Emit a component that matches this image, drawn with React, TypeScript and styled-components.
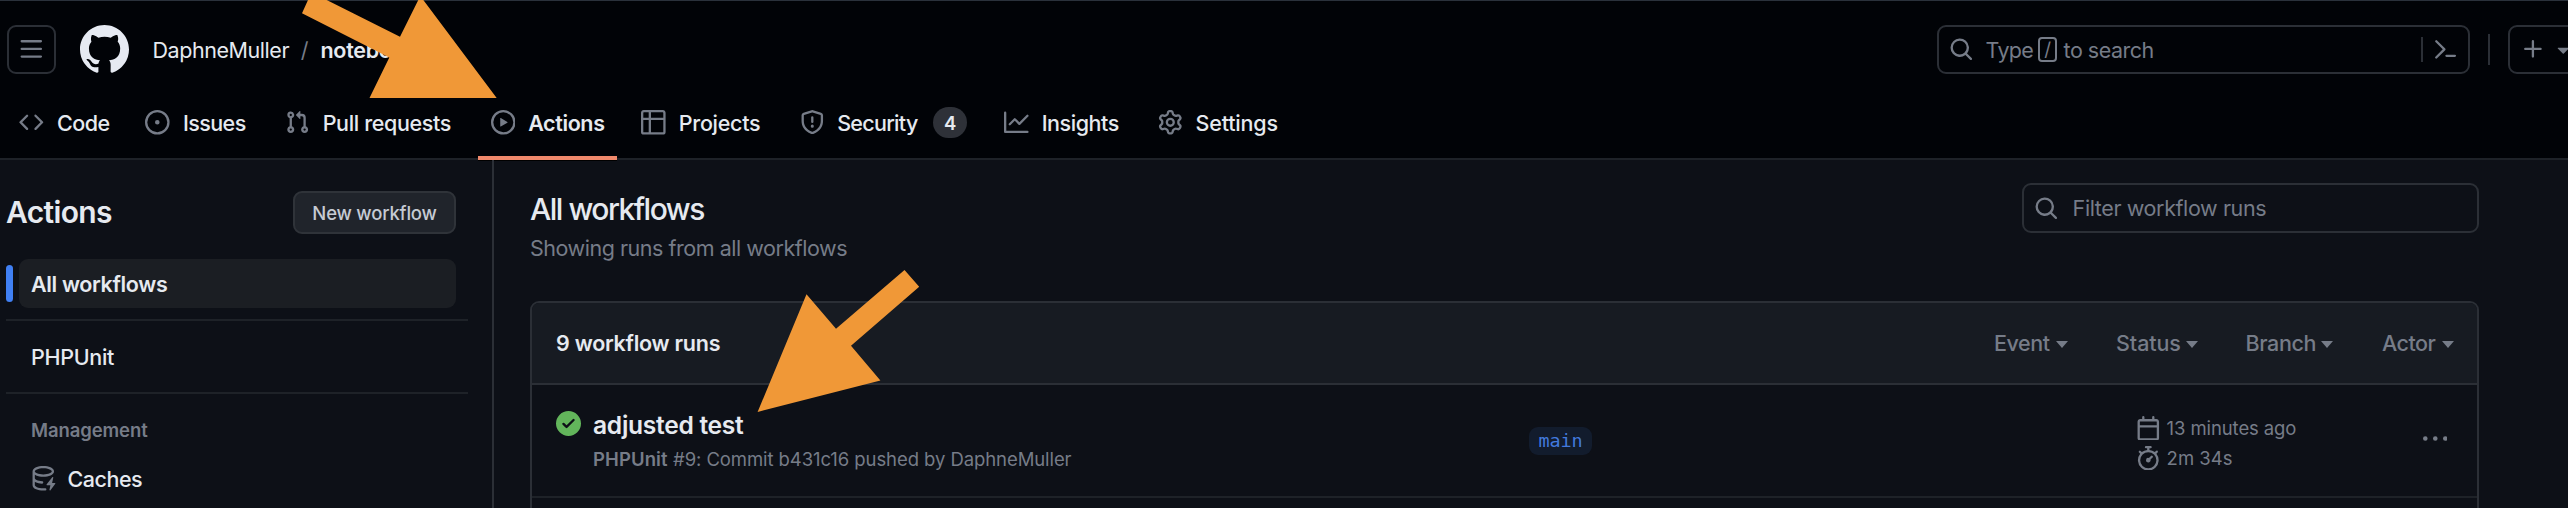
import React from 'react';
import styled, { createGlobalStyle } from 'styled-components';

const color = {
  header: '#010307',
  canvas: '#0d1017',
  subtle: '#171b22',
  border: '#2b2f36',
  borderMuted: '#1e2228',
  fg: '#e6eaf0',
  muted: '#767c88',
  accent: '#f0896c',
  blue: '#4080f4',
  green: '#62b55b',
  arrow: '#f09837',
};

const Global = createGlobalStyle`
  * { box-sizing: border-box; }
  body { margin: 0; background: ${color.canvas}; overflow: hidden; }
`;

const Page = styled.div`
  position: relative;
  width: 2568px;
  height: 508px;
  overflow: hidden;
  display: flex;
  flex-direction: column;
  background: ${color.canvas};
  color: ${color.fg};
  font-family: Inter, 'Liberation Sans', sans-serif;
  font-size: 21.5px;
`;

const Text = styled.span<{
  $ls?: number; $size?: number; $weight?: number; $lh?: number; $w?: number; $muted?: boolean; $mt?: number;
}>`
  display: block;
  flex: none;
  white-space: pre;
  letter-spacing: ${p => p.$ls ?? 0}px;
  font-size: ${p => p.$size ?? 21.5}px;
  font-weight: ${p => p.$weight ?? 400};
  line-height: ${p => p.$lh ?? 30}px;
  width: ${p => (p.$w ? `${p.$w}px` : 'auto')};
  margin-top: ${p => p.$mt ?? 0}px;
  color: ${p => (p.$muted ? color.muted : 'inherit')};
`;

const Svg = styled.svg<{ $size?: number }>`
  display: block;
  flex: none;
  width: ${p => p.$size ?? 24.6}px;
  height: ${p => p.$size ?? 24.6}px;
  fill: currentColor;
`;

const IconBox = styled.span`
  display: flex;
  flex: none;
  color: ${color.muted};
`;

const paths = {
  bars: 'M1 2.75A.75.75 0 0 1 1.75 2h12.5a.75.75 0 0 1 0 1.5H1.75A.75.75 0 0 1 1 2.75Zm0 5A.75.75 0 0 1 1.75 7h12.5a.75.75 0 0 1 0 1.5H1.75A.75.75 0 0 1 1 7.75ZM1.75 12h12.5a.75.75 0 0 1 0 1.5H1.75a.75.75 0 0 1 0-1.5Z',
  github: 'M8 0c4.42 0 8 3.58 8 8a8.013 8.013 0 0 1-5.45 7.59c-.4.08-.55-.17-.55-.38 0-.27.01-1.13.01-2.2 0-.75-.25-1.23-.54-1.48 1.78-.2 3.65-.88 3.65-3.95 0-.88-.31-1.59-.82-2.15.08-.2.36-1.02-.08-2.12 0 0-.67-.22-2.2.82-.64-.18-1.32-.27-2-.27-.68 0-1.36.09-2 .27-1.53-1.03-2.2-.82-2.2-.82-.44 1.1-.16 1.92-.08 2.12-.51.56-.82 1.28-.82 2.15 0 3.06 1.86 3.75 3.64 3.95-.23.2-.44.55-.51 1.07-.46.21-1.61.55-2.33-.66-.15-.24-.6-.83-1.23-.82-.67.01-.27.38.01.53.34.19.73.9.82 1.13.16.45.68 1.31 2.69.94 0 .67.01 1.3.01 1.49 0 .21-.15.45-.55.38A7.995 7.995 0 0 1 0 8c0-4.42 3.58-8 8-8Z',
  code: 'm11.28 3.22 4.25 4.25a.75.75 0 0 1 0 1.06l-4.25 4.25a.749.749 0 0 1-1.275-.326.749.749 0 0 1 .215-.734L13.94 8l-3.72-3.72a.749.749 0 0 1 .326-1.275.749.749 0 0 1 .734.215Zm-6.56 0a.751.751 0 0 1 1.042.018.751.751 0 0 1 .018 1.042L2.06 8l3.72 3.72a.749.749 0 0 1-.326 1.275.749.749 0 0 1-.734-.215L.47 8.53a.75.75 0 0 1 0-1.06Z',
  issue: 'M8 9.5a1.5 1.5 0 1 0 0-3 1.5 1.5 0 0 0 0 3ZM8 0a8 8 0 1 1 0 16A8 8 0 0 1 8 0ZM1.5 8a6.5 6.5 0 1 0 13 0 6.5 6.5 0 0 0-13 0Z',
  pull: 'M1.5 3.25a2.25 2.25 0 1 1 3 2.122v5.256a2.251 2.251 0 1 1-1.5 0V5.372A2.25 2.25 0 0 1 1.5 3.25Zm5.677-.177L9.573.677A.25.25 0 0 1 10 .854V2.5h1A2.5 2.5 0 0 1 13.5 5v5.628a2.251 2.251 0 1 1-1.5 0V5a1 1 0 0 0-1-1h-1v1.646a.25.25 0 0 1-.427.177L7.177 3.427a.25.25 0 0 1 0-.354ZM3.75 2.5a.75.75 0 1 0 0 1.5.75.75 0 0 0 0-1.5Zm0 9.5a.75.75 0 1 0 0 1.5.75.75 0 0 0 0-1.5Zm8.25.75a.75.75 0 1 0 1.5 0 .75.75 0 0 0-1.5 0Z',
  play: 'M8 0a8 8 0 1 1 0 16A8 8 0 0 1 8 0ZM1.5 8a6.5 6.5 0 1 0 13 0 6.5 6.5 0 0 0-13 0Zm4.879-2.773 4.264 2.559a.25.25 0 0 1 0 .428l-4.264 2.559A.25.25 0 0 1 6 10.559V5.442a.25.25 0 0 1 .379-.215Z',
  table: 'M0 1.75C0 .784.784 0 1.75 0h12.5C15.216 0 16 .784 16 1.75v12.5A1.75 1.75 0 0 1 14.25 16H1.75A1.75 1.75 0 0 1 0 14.25ZM6.5 6.5v8h7.75a.25.25 0 0 0 .25-.25V6.5Zm8-1.5V1.75a.25.25 0 0 0-.25-.25H6.5V5Zm-13 1.5v7.75c0 .138.112.25.25.25H5v-8ZM5 5V1.5H1.75a.25.25 0 0 0-.25.25V5Z',
  shield: 'M7.467.133a1.748 1.748 0 0 1 1.066 0l5.25 1.68A1.75 1.75 0 0 1 15 3.48V7c0 1.566-.32 3.182-1.303 4.682-.983 1.498-2.585 2.813-5.032 3.855a1.697 1.697 0 0 1-1.33 0c-2.447-1.042-4.049-2.357-5.032-3.855C1.32 10.182 1 8.566 1 7V3.48a1.75 1.75 0 0 1 1.217-1.667Zm.61 1.429a.25.25 0 0 0-.153 0l-5.25 1.68a.25.25 0 0 0-.174.238V7c0 1.358.275 2.666 1.057 3.86.784 1.194 2.121 2.34 4.366 3.297a.196.196 0 0 0 .154 0c2.245-.956 3.582-2.104 4.366-3.298C13.225 9.666 13.5 8.36 13.5 7V3.48a.251.251 0 0 0-.174-.237l-5.25-1.68ZM8.75 4.75v3a.75.75 0 0 1-1.5 0v-3a.75.75 0 0 1 1.5 0ZM9 10.5a1 1 0 1 1-2 0 1 1 0 0 1 2 0Z',
  graph: 'M1.5 1.75V13.5h13.75a.75.75 0 0 1 0 1.5H.75a.75.75 0 0 1-.75-.75V1.75a.75.75 0 0 1 1.5 0Zm14.28 2.53-5.25 5.25a.75.75 0 0 1-1.06 0L7 7.06 4.28 9.78a.751.751 0 0 1-1.042-.018.751.751 0 0 1-.018-1.042l3.25-3.25a.75.75 0 0 1 1.06 0L10 7.94l4.72-4.72a.751.751 0 0 1 1.042.018.751.751 0 0 1 .018 1.042Z',
  gear: 'M8 0a8.2 8.2 0 0 1 .701.031C9.444.095 9.99.645 10.16 1.29l.288 1.107c.018.066.079.158.212.224.231.114.454.243.668.386.123.082.233.09.299.071l1.103-.303c.644-.176 1.392.021 1.82.63.27.385.506.792.704 1.218.315.675.111 1.422-.364 1.891l-.814.806c-.049.048-.098.147-.088.294.016.257.016.515 0 .772-.01.147.038.246.088.294l.814.806c.475.469.679 1.216.364 1.891a7.977 7.977 0 0 1-.704 1.217c-.428.61-1.176.807-1.82.63l-1.102-.302c-.067-.019-.177-.011-.3.071a5.909 5.909 0 0 1-.668.386c-.133.066-.194.158-.211.224l-.29 1.106c-.168.646-.715 1.196-1.458 1.26a8.006 8.006 0 0 1-1.402 0c-.743-.064-1.289-.614-1.458-1.26l-.289-1.106c-.018-.066-.079-.158-.212-.224a5.738 5.738 0 0 1-.668-.386c-.123-.082-.233-.09-.299-.071l-1.103.303c-.644.176-1.392-.021-1.82-.63a8.12 8.12 0 0 1-.704-1.218c-.315-.675-.111-1.422.363-1.891l.815-.806c.05-.048.098-.147.088-.294a6.214 6.214 0 0 1 0-.772c.01-.147-.038-.246-.088-.294l-.815-.806C.635 6.045.431 5.298.746 4.623a7.92 7.92 0 0 1 .704-1.217c.428-.61 1.176-.807 1.82-.63l1.102.302c.067.019.177.011.3-.071.214-.143.437-.272.668-.386.133-.066.194-.158.211-.224l.29-1.106C6.009.645 6.556.095 7.299.03 7.53.01 7.764 0 8 0Zm-.571 1.525c-.036.003-.108.036-.137.146l-.289 1.105c-.147.561-.549.967-.998 1.189-.173.086-.34.183-.5.29-.417.278-.97.423-1.529.27l-1.103-.303c-.109-.03-.175.016-.195.045-.22.312-.412.644-.573.99-.014.031-.021.11.059.19l.815.806c.411.406.562.957.53 1.456a4.709 4.709 0 0 0 0 .582c.032.499-.119 1.05-.53 1.456l-.815.806c-.081.08-.073.159-.059.19.162.346.353.677.573.989.02.03.085.076.195.046l1.102-.303c.56-.153 1.113-.008 1.53.27.161.107.328.204.501.29.447.222.85.629.997 1.189l.289 1.105c.029.109.101.143.137.146a6.6 6.6 0 0 0 1.142 0c.036-.003.108-.036.137-.146l.289-1.105c.147-.561.549-.967.998-1.189.173-.086.34-.183.5-.29.417-.278.97-.423 1.529-.27l1.103.303c.109.029.175-.016.195-.045.22-.313.411-.644.573-.99.014-.031.021-.11-.059-.19l-.815-.806c-.411-.406-.562-.957-.53-1.456a4.709 4.709 0 0 0 0-.582c-.032-.499.119-1.05.53-1.456l.815-.806c.081-.08.073-.159.059-.19a6.464 6.464 0 0 0-.573-.989c-.02-.03-.085-.076-.195-.046l-1.102.303c-.56.153-1.113.008-1.53-.27a4.44 4.44 0 0 0-.501-.29c-.447-.222-.85-.629-.997-1.189l-.289-1.105c-.029-.11-.101-.143-.137-.146a6.6 6.6 0 0 0-1.142 0ZM11 8a3 3 0 1 1-6 0 3 3 0 0 1 6 0ZM9.5 8a1.5 1.5 0 1 0-3.001.001A1.5 1.5 0 0 0 9.5 8Z',
  search: 'M10.68 11.74a6 6 0 0 1-7.922-8.982 6 6 0 0 1 8.982 7.922l3.04 3.04a.749.749 0 0 1-.326 1.275.749.749 0 0 1-.734-.215ZM11.5 7a4.499 4.499 0 1 0-8.997 0A4.499 4.499 0 0 0 11.5 7Z',
  prompt: 'm6.354 8.04-4.773 4.773a.75.75 0 1 0 1.061 1.06L7.945 8.57a.75.75 0 0 0 0-1.06L2.642 2.206a.75.75 0 0 0-1.06 1.061L6.353 8.04ZM8.75 11.5a.75.75 0 0 0 0 1.5h5.5a.75.75 0 0 0 0-1.5h-5.5Z',
  plus: 'M7.75 2a.75.75 0 0 1 .75.75V7h4.25a.75.75 0 0 1 0 1.5H8.5v4.25a.75.75 0 0 1-1.5 0V8.5H2.75a.75.75 0 0 1 0-1.5H7V2.75A.75.75 0 0 1 7.75 2Z',
  caret: 'm4.427 7.427 3.396 3.396a.25.25 0 0 0 .354 0l3.396-3.396A.25.25 0 0 0 11.396 7H4.604a.25.25 0 0 0-.177.427Z',
  cache: 'M2.5 5.724V8c0 .248.238.7 1.169 1.159.874.43 2.144.745 3.62.822a.75.75 0 1 1-.078 1.498c-1.622-.085-3.102-.432-4.204-.975a5.565 5.565 0 0 1-.507-.28V12.5c0 .133.058.318.282.551.227.237.591.483 1.101.707 1.015.447 2.47.742 4.117.742.406 0 .802-.018 1.183-.052a.751.751 0 1 1 .134 1.494C8.89 15.98 8.45 16 8 16c-1.805 0-3.475-.32-4.721-.869-.623-.274-1.173-.619-1.579-1.041-.408-.425-.7-.964-.7-1.59v-9c0-.626.292-1.165.7-1.591.406-.42.956-.766 1.579-1.04C4.525.32 6.195 0 8 0c1.806 0 3.476.32 4.721.869.623.274 1.173.619 1.579 1.041.408.425.7.964.7 1.59 0 .626-.292 1.165-.7 1.591-.406.42-.956.766-1.578 1.04C11.475 6.68 9.805 7 8 7c-1.805 0-3.475-.32-4.721-.869a6.15 6.15 0 0 1-.779-.407Zm0-2.224c0 .133.058.318.282.551.227.237.591.483 1.101.707C4.898 5.205 6.353 5.5 8 5.5c1.646 0 3.101-.295 4.118-.742.508-.224.873-.471 1.1-.708.224-.232.282-.417.282-.55 0-.133-.058-.318-.282-.551-.227-.237-.591-.483-1.101-.707C11.102 1.795 9.647 1.5 8 1.5c-1.646 0-3.101.295-4.118.742-.508.224-.873.471-1.1.708-.224.232-.282.417-.282.55Zm11.99 4.082a.375.375 0 0 0-.66-.313l-3.625 4.625a.375.375 0 0 0 .295.606h2.127l-.619 2.922a.375.375 0 0 0 .666.304l3.125-4.125A.375.375 0 0 0 15.5 11h-1.778Z',
  check: 'M8 16A8 8 0 1 1 8 0a8 8 0 0 1 0 16Zm3.78-9.72a.751.751 0 0 0-.018-1.042.751.751 0 0 0-1.042-.018L6.75 9.19 5.28 7.72a.751.751 0 0 0-1.042.018.751.751 0 0 0-.018 1.042l2 2a.75.75 0 0 0 1.06 0Z',
  calendar: 'M4.75 0a.75.75 0 0 1 .75.75V2h5V.75a.75.75 0 0 1 1.5 0V2h1.25c.966 0 1.75.784 1.75 1.75v10.5A1.75 1.75 0 0 1 13.25 16H2.75A1.75 1.75 0 0 1 1 14.25V3.75C1 2.784 1.784 2 2.75 2H4V.75A.75.75 0 0 1 4.75 0ZM2.5 7.5v6.75c0 .138.112.25.25.25h10.5a.25.25 0 0 0 .25-.25V7.5Zm10.75-4H2.75a.25.25 0 0 0-.25.25V6h11V3.75a.25.25 0 0 0-.25-.25Z',
  stopwatch: 'M5.75.75A.75.75 0 0 1 6.5 0h3a.75.75 0 0 1 0 1.5h-.75v1l-.001.041a6.724 6.724 0 0 1 3.464 1.435l.007-.006.75-.75a.749.749 0 0 1 1.275.326.749.749 0 0 1-.215.734l-.75.75-.006.007a6.75 6.75 0 1 1-10.548 0L2.72 5.03l-.75-.75a.751.751 0 0 1 .018-1.042.751.751 0 0 1 1.042-.018l.75.75.007.006A6.72 6.72 0 0 1 7.25 2.541V1.5H6.5a.75.75 0 0 1-.75-.75ZM8 14.5a5.25 5.25 0 1 0-.001-10.501A5.25 5.25 0 0 0 8 14.5Zm.389-6.7 1.33-1.33a.75.75 0 1 1 1.061 1.06L9.45 8.861A1.503 1.503 0 0 1 8 10.75a1.499 1.499 0 1 1 .389-2.95Z',
  kebab: 'M8 9a1.5 1.5 0 1 0 0-3 1.5 1.5 0 0 0 0 3ZM1.5 9a1.5 1.5 0 1 0 0-3 1.5 1.5 0 0 0 0 3Zm13 0a1.5 1.5 0 1 0 0-3 1.5 1.5 0 0 0 0 3Z',
};

const Icon = ({ name, size }: { name: keyof typeof paths; size?: number }) => (
  <IconBox>
    <Svg viewBox="0 0 16 16" $size={size}><path d={paths[name]} /></Svg>
  </IconBox>
);

/* Header */

const Header = styled.header`
  flex: none;
  height: 160px;
  display: flex;
  flex-direction: column;
  background: ${color.header};
  border-top: 1px solid #2a313b;
  border-bottom: 2px solid ${color.borderMuted};
`;

const TopBar = styled.div`
  flex: none;
  height: 49px;
  margin-top: 24px;
  padding-left: 6.5px;
  display: flex;
  align-items: center;
`;

const MenuButton = styled.button`
  width: 49px;
  height: 49px;
  padding: 0;
  display: flex;
  align-items: center;
  justify-content: center;
  background: transparent;
  border: 2px solid ${color.border};
  border-radius: 9px;
`;

const Logo = styled.a`
  margin-left: 24px;
  display: flex;
  color: #e6eaf2;
`;

const Breadcrumb = styled.div`
  margin-left: 24px;
  display: flex;
  align-items: center;
  flex: 1;
`;

const Slash = styled.span`
  width: 31px;
  text-align: center;
  color: ${color.muted};
  padding-right: 1px;
`;

const SearchBox = styled.div`
  flex: none;
  width: 533px;
  height: 49px;
  padding: 0 10px 0 10px;
  display: flex;
  align-items: center;
  border: 2px solid ${color.border};
  border-radius: 9px;
`;

const SearchHint = styled.div`
  flex: 1;
  margin-left: 12px;
  display: flex;
  align-items: center;
`;

const SlashKey = styled.kbd`
  width: 19px;
  height: 25px;
  margin: 0 6.5px 0 4.5px;
  display: flex;
  align-items: center;
  justify-content: center;
  border: 2px solid ${color.muted};
  border-radius: 4px;
  color: ${color.muted};
  font: 19px/20px Inter, sans-serif;
`;

const Divider = styled.span<{ $h: number; $ml?: number; $mr: number }>`
  flex: none;
  width: 2px;
  height: ${p => p.$h}px;
  margin-left: ${p => p.$ml ?? 0}px;
  margin-right: ${p => p.$mr}px;
  background: ${color.border};
`;

const CreateButton = styled.button`
  flex: none;
  width: 86px;
  height: 49px;
  margin-right: -26px;
  padding: 0 0 0 11px;
  display: flex;
  align-items: center;
  gap: 5px;
  background: transparent;
  border: 2px solid ${color.border};
  border-radius: 9px;
`;

const Nav = styled.nav`
  flex: none;
  margin-top: 12px;
  height: 74px;
  padding-left: 7px;
  display: flex;
  gap: 12.3px;
`;

const Tab = styled.a<{ $active?: boolean }>`
  flex: none;
  height: 74px;
  padding: 0 12.3px 1px;
  display: flex;
  align-items: center;
  gap: 13px;
  ${p => p.$active && `box-shadow: 0 1px 0 #000; background: linear-gradient(${color.accent}, ${color.accent}) 0 100% / 100% 4px no-repeat;`}
`;

const Counter = styled.span`
  width: 34px;
  height: 31px;
  display: flex;
  align-items: center;
  justify-content: center;
  border-radius: 16px;
  background: #2e3138;
  font-size: 18.5px;
  font-weight: 600;
`;

/* Sidebar */

const Body = styled.div`
  flex: 1;
  min-height: 0;
  display: flex;
`;

const Sidebar = styled.aside`
  flex: none;
  width: 494px;
  padding: 31px 24px 0 6px;
  display: flex;
  flex-direction: column;
  border-right: 2px solid ${color.border};
`;

const SideHead = styled.div`
  height: 43px;
  padding-right: 12px;
  display: flex;
  align-items: center;
  justify-content: space-between;
`;

const NewButton = styled.button`
  width: 163px;
  height: 43px;
  padding: 0;
  display: flex;
  align-items: center;
  justify-content: center;
  font-family: inherit;
  color: #c5cad3;
  background: #20242b;
  border: 2px solid #2f3339;
  border-radius: 9px;
`;

const ActiveRow = styled.div`
  margin: 25px 12px 0 0;
  display: flex;
  align-items: center;
  gap: 6px;
`;

const ActiveMark = styled.span`
  width: 7px;
  height: 37px;
  border-radius: 4px;
  background: ${color.blue};
`;

const SideItem = styled.div<{ $active?: boolean }>`
  flex: ${p => (p.$active ? 1 : 'none')};
  height: 49px;
  margin-left: ${p => (p.$active ? 0 : 13)}px;
  padding-left: 12px;
  display: flex;
  align-items: center;
  gap: 12px;
  border-radius: 9px;
  background: ${p => (p.$active ? '#1b1e23' : 'transparent')};
`;

const Rule = styled.hr`
  flex: none;
  width: 462px;
  height: 2px;
  margin: 11px 0 11px;
  border: 0;
  background: ${color.borderMuted};
`;

const GroupTitle = styled.div`
  height: 49px;
  padding-left: 25px;
  display: flex;
  align-items: center;
`;

/* Main */

const Main = styled.main`
  width: 1985px;
  padding: 23px 0 0 36px;
  display: flex;
  flex-direction: column;
`;

const MainHead = styled.div`
  flex: none;
  height: 118px;
  display: flex;
  justify-content: space-between;
`;

const Filter = styled.div`
  width: 457px;
  height: 50px;
  padding: 0 0 0 10px;
  display: flex;
  align-items: center;
  gap: 14px;
  border: 2px solid ${color.border};
  border-radius: 9px;
`;

const Runs = styled.section`
  flex: none;
  height: 240px;
  border: 2px solid ${color.border};
  border-radius: 9px 9px 0 0;
  overflow: hidden;
`;

const RunsHead = styled.div`
  height: 82px;
  padding: 0 23px 0 24px;
  display: flex;
  align-items: center;
  justify-content: space-between;
  background: ${color.subtle};
  border-bottom: 2px solid ${color.border};
`;

const Menus = styled.div`
  display: flex;
`;

const Menu = styled.span<{ $w: number; $gap: number }>`
  width: ${p => p.$w}px;
  margin-right: ${p => p.$gap}px;
  display: flex;
  align-items: center;
  justify-content: space-between;
`;

const Triangle = styled.span`
  flex: none;
  width: 0;
  margin: 2px 0 0;
  border: 6px solid transparent;
  border-top: 7px solid ${color.muted};
  border-bottom: 0;
`;

const Run = styled.div`
  height: 113px;
  padding: 26px 0 0 24px;
  display: flex;
  border-bottom: 2px solid ${color.borderMuted};
`;

const RunStatus = styled.span`
  flex: none;
  display: flex;
  height: 26px;
  svg { fill: ${color.green}; }
`;

const RunInfo = styled.div`
  flex: none;
  width: 936px;
  margin: -5px 0 0 12px;
`;

const RunMeta = styled.div`
  display: flex;
`;

const BranchCell = styled.div`
  flex: none;
  width: 607px;
`;

const BranchLabel = styled.span`
  display: flex;
  justify-content: center;
  width: 63px;
  height: 28px;
  margin-top: 16px;
  border-radius: 9px;
  background: #121c2d;
  color: #4279dc;
  font: 18.5px/27px 'DejaVu Sans Mono', monospace;
  letter-spacing: -0.15px;
`;

const Times = styled.div`
  flex: none;
  width: 286.5px;
  display: flex;
  flex-direction: column;
  margin-top: 2px;
`;

const TimeLine = styled.div`
  height: 30px;
  display: flex;
  align-items: center;
  gap: 6px;
`;

const More = styled.div`
  margin-top: 16px;
`;

const Annotations = styled.svg`
  position: absolute;
  left: 0;
  top: 0;
  fill: ${color.arrow};
`;

const tabs: { icon: keyof typeof paths; label: string; w: number; ls: number; active?: boolean; count?: number }[] = [
  { icon: 'code', label: 'Code', w: 51.7, ls: -0.45 },
  { icon: 'issue', label: 'Issues', w: 65.1, ls: -0.6 },
  { icon: 'pull', label: 'Pull requests', w: 131, ls: -0.36 },
  { icon: 'play', label: 'Actions', w: 76.2, ls: -0.38, active: true },
  { icon: 'table', label: 'Projects', w: 83.9, ls: -0.3 },
  { icon: 'shield', label: 'Security', w: 83, ls: -0.7, count: 4 },
  { icon: 'graph', label: 'Insights', w: 79.4, ls: -0.45 },
  { icon: 'gear', label: 'Settings', w: 84, ls: -0.18 },
];

const menus = [
  { label: 'Event', ls: -0.45, w: 74, gap: 48 },
  { label: 'Status', ls: -0.09, w: 81.5, gap: 48 },
  { label: 'Branch', ls: -0.36, w: 87.5, gap: 49 },
  { label: 'Actor', ls: -0.5, w: 72, gap: 0 },
];

export default function App() {
  return (
    <Page>
      <Global />
      <Header>
        <TopBar>
          <MenuButton><Icon name="bars" /></MenuButton>
          <Logo><Svg viewBox="0 0 16 16" $size={49}><path d={paths.github} /></Svg></Logo>
          <Breadcrumb>
            <Text $ls={-0.44} $w={137}>DaphneMuller</Text>
            <Slash>/</Slash>
            <Text $ls={-0.3} $weight={600}>notebooks</Text>
          </Breadcrumb>
          <SearchBox>
            <Icon name="search" />
            <SearchHint>
              <Text $muted $ls={-0.7} $w={48}>Type</Text>
              <SlashKey>/</SlashKey>
              <Text $muted $ls={-0.5}>to search</Text>
            </SearchHint>
            <Divider $h={25} $mr={10} />
            <Icon name="prompt" />
          </SearchBox>
          <Divider $h={31} $ml={18} $mr={18} />
          <CreateButton>
            <Icon name="plus" />
            <Icon name="caret" />
          </CreateButton>
        </TopBar>
        <Nav>
          {tabs.map(t => (
            <Tab key={t.label} $active={t.active}>
              <Icon name={t.icon} />
              <Text $w={t.w} $ls={t.ls} $weight={t.active ? 600 : 500}>{t.label}</Text>
              {t.count && <Counter>{t.count}</Counter>}
            </Tab>
          ))}
        </Nav>
      </Header>

      <Body>
        <Sidebar>
          <SideHead>
            <Text $size={30} $weight={600} $ls={-0.65} $lh={43}>Actions</Text>
            <NewButton><Text $size={18.5} $weight={500} $ls={-0.2}>New workflow</Text></NewButton>
          </SideHead>
          <ActiveRow>
            <ActiveMark />
            <SideItem $active><Text $weight={600} $ls={-0.34}>All workflows</Text></SideItem>
          </ActiveRow>
          <Rule />
          <SideItem><Text $weight={500} $ls={-0.3}>PHPUnit</Text></SideItem>
          <Rule />
          <GroupTitle><Text $muted $size={18.5} $weight={600} $ls={-0.1}>Management</Text></GroupTitle>
          <SideItem>
            <Icon name="cache" />
            <Text $weight={500} $ls={-0.5}>Caches</Text>
          </SideItem>
        </Sidebar>

        <Main>
          <MainHead>
            <div>
              <Text $size={30} $ls={-1.5} $weight={450} $lh={40} $mt={6}>All workflows</Text>
              <Text $muted $ls={-0.47} $mt={4}>Showing runs from all workflows</Text>
            </div>
            <Filter>
              <Icon name="search" />
              <Text $muted $ls={-0.39}>Filter workflow runs</Text>
            </Filter>
          </MainHead>
          <Runs>
            <RunsHead>
              <Text $weight={600} $ls={-0.25}>9 workflow runs</Text>
              <Menus>
                {menus.map(m => (
                  <Menu key={m.label} $w={m.w} $gap={m.gap}>
                    <Text $muted $weight={500} $ls={m.ls}>{m.label}</Text>
                    <Triangle />
                  </Menu>
                ))}
              </Menus>
            </RunsHead>
            <Run>
              <RunStatus><Icon name="check" size={25} /></RunStatus>
              <RunInfo>
                <Text $size={24.6} $weight={600} $ls={-0.29} $lh={38}>adjusted test</Text>
                <RunMeta>
                  <Text $muted $size={18.5} $weight={600} $w={80} $ls={0.1}>PHPUnit</Text>
                  <Text $muted $size={18.5} $ls={-0.08}>#9: Commit b431c16 pushed by DaphneMuller</Text>
                </RunMeta>
              </RunInfo>
              <BranchCell><BranchLabel>main</BranchLabel></BranchCell>
              <Times>
                <TimeLine><Icon name="calendar" /><Text $muted $size={18.5} $ls={-0.1}>13 minutes ago</Text></TimeLine>
                <TimeLine><Icon name="stopwatch" /><Text $muted $size={18.5}>2m 34s</Text></TimeLine>
              </Times>
              <More><Icon name="kebab" /></More>
            </Run>
          </Runs>
        </Main>
      </Body>

      <Annotations width="2568" height="508" viewBox="0 0 2568 508">
        <polygon points="302,13.3 308,0 326.7,0 400,36.7 418.3,0 423.3,0 496.7,98 369.5,98 389.3,57.5" />
        <polygon points="904.5,270 919.2,286.7 851,345.7 880.4,380.5 757.6,412 806.5,294.3 836,328.7" />
      </Annotations>
    </Page>
  );
}
